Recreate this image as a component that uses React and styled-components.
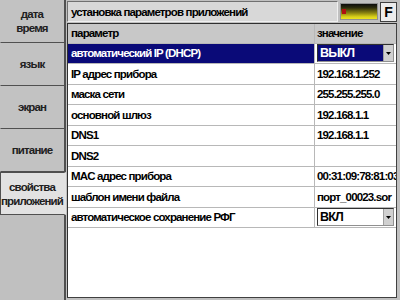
import React from "react";
import styled, { createGlobalStyle } from "styled-components";

const Global = createGlobalStyle`
  html, body { margin: 0; padding: 0; }
  body { font-family: "Liberation Sans", Arial, sans-serif; }
  * { box-sizing: border-box; }
`;

const Screen = styled.div`
  width: 400px;
  height: 300px;
  display: flex;
  background: #c0c0c0;
  overflow: hidden;
  font-family: "Liberation Sans", Arial, sans-serif;
  font-weight: bold;
  font-size: 11.5px;
  letter-spacing: -0.85px;
  color: #000;
`;

const Nav = styled.div`
  width: 66px;
  display: flex;
  flex-direction: column;
`;

const Tab = styled.div`
  height: 43px;
  display: flex;
  align-items: center;
  justify-content: center;
  text-align: center;
  line-height: 14px;
  color: #202020;
  background: ${(p) => (p.$active ? "#e2e2e2" : "#c2c2c2")};
  border-bottom: 1px solid #505050;
  border-right: ${(p) => (p.$active ? "2px solid #e2e2e2" : "2px solid #505050")};
  border-left: ${(p) => (p.$active ? "1px solid #505050" : "1px solid #c2c2c2")};
  border-top: ${(p) => (p.$active ? "1px solid #505050" : "0")};
  padding-right: 1px;
`;

const NavFill = styled.div`
  flex: 1;
  border-right: 2px solid #505050;
`;

const Main = styled.div`
  flex: 1;
  display: flex;
  flex-direction: column;
  padding: 1px 3px 2px 1px;
  gap: 1px;
`;

const TopBar = styled.div`
  height: 21px;
  display: flex;
  align-items: center;
  gap: 2px;
`;

const Title = styled.div`
  flex: 1;
  height: 21px;
  display: flex;
  align-items: center;
  padding-left: 3px;
  background: #d8d8d8;
  border-top: 1px solid #707070;
  border-left: 1px solid #707070;
  border-bottom: 1px solid #f0f0f0;
  border-right: 1px solid #f0f0f0;
`;

const Battery = styled.div`
  width: 38px;
  height: 17px;
  position: relative;
  background: linear-gradient(to bottom, #0c0c0c 0%, #2c2c0c 25%, #8a8410 60%, #d8d018 85%, #ece420 100%);
  border: 1px solid #909090;
`;

const BatteryMark = styled.div`
  position: absolute;
  left: 1px;
  top: 5px;
  width: 4px;
  height: 5px;
  background: #b01010;
`;

const FButton = styled.div`
  width: 17px;
  height: 20px;
  display: flex;
  align-items: center;
  justify-content: center;
  font-size: 14px;
  letter-spacing: 0;
  background: #ececec;
  border: 1px solid #404040;
`;

const Panel = styled.div`
  flex: 1;
  background: #fff;
  border-top: 1px solid #303030;
  border-left: 1px solid #303030;
  border-bottom: 1px solid #404040;
  border-right: 1px solid #404040;
  overflow: hidden;
`;

const Row = styled.div`
  display: grid;
  grid-template-columns: 246px 1fr;
  height: ${(p) => (p.$head ? "19.5px" : "20.5px")};
  border-bottom: 1px solid #b8b8b8;
  background: ${(p) => (p.$head ? "#c8c8c8" : "#fff")};
`;

const Cell = styled.div`
  display: flex;
  align-items: center;
  padding-left: 3px;
  white-space: nowrap;
  overflow: hidden;
  color: ${(p) => (p.$sel ? "#fff" : "#000")};
  background: ${(p) => (p.$sel ? "#0a0a78" : "transparent")};
  & + & {
    border-left: 1px solid #b8b8b8;
    padding-left: 2px;
  }
`;

const Select = styled.div`
  width: 77px;
  height: 18px;
  display: flex;
  align-items: stretch;
  background: ${(p) => (p.$sel ? "#0a0a78" : "#fff")};
  color: ${(p) => (p.$sel ? "#fff" : "#000")};
  border-top: 1px solid #303030;
  border-left: 1px solid #303030;
  border-bottom: 1px solid #909090;
  border-right: 1px solid #909090;
`;

const SelectText = styled.div`
  flex: 1;
  display: flex;
  align-items: center;
  padding-left: 2px;
  font-size: 12.5px;
`;

const Arrow = styled.div`
  width: 10px;
  display: flex;
  align-items: center;
  justify-content: center;
  background: #d0d0d0;
  border-left: 1px solid #a0a0a0;
`;

const Tri = () => (
  <svg width="5" height="3" viewBox="0 0 5 3">
    <path d="M0 0 L5 0 L2.5 3 Z" fill="#000" />
  </svg>
);

const tabs = [
  ["дата", "время"],
  ["язык"],
  ["экран"],
  ["питание"],
  ["свойства", "приложений"],
];

const rows = [
  ["автоматический IP (DHCP)", "ВЫКЛ", "select", true],
  ["IP адрес прибора", "192.168.1.252"],
  ["маска сети", "255.255.255.0"],
  ["основной шлюз", "192.168.1.1"],
  ["DNS1", "192.168.1.1"],
  ["DNS2", ""],
  ["MAC адрес прибора", "00:31:09:78:81:03"],
  ["шаблон имени файла", "порт_00023.sor"],
  ["автоматическое сохранение РФГ", "ВКЛ", "select"],
];

export default function App() {
  return (
    <>
      <Global />
      <Screen>
        <Nav>
          {tabs.map((t, i) => (
            <Tab key={i} $active={i === 4}>
              <div>
                {t.map((l, j) => (
                  <div key={j}>{l}</div>
                ))}
              </div>
            </Tab>
          ))}
          <NavFill />
        </Nav>
        <Main>
          <TopBar>
            <Title>установка параметров приложений</Title>
            <Battery>
              <BatteryMark />
            </Battery>
            <FButton>F</FButton>
          </TopBar>
          <Panel>
            <Row $head>
              <Cell>параметр</Cell>
              <Cell>значение</Cell>
            </Row>
            {rows.map(([p, v, kind, sel], i) => (
              <Row key={i}>
                <Cell $sel={sel}>{p}</Cell>
                <Cell>
                  {kind === "select" ? (
                    <Select $sel={sel}>
                      <SelectText>{v}</SelectText>
                      <Arrow>
                        <Tri />
                      </Arrow>
                    </Select>
                  ) : (
                    v
                  )}
                </Cell>
              </Row>
            ))}
          </Panel>
        </Main>
      </Screen>
    </>
  );
}
